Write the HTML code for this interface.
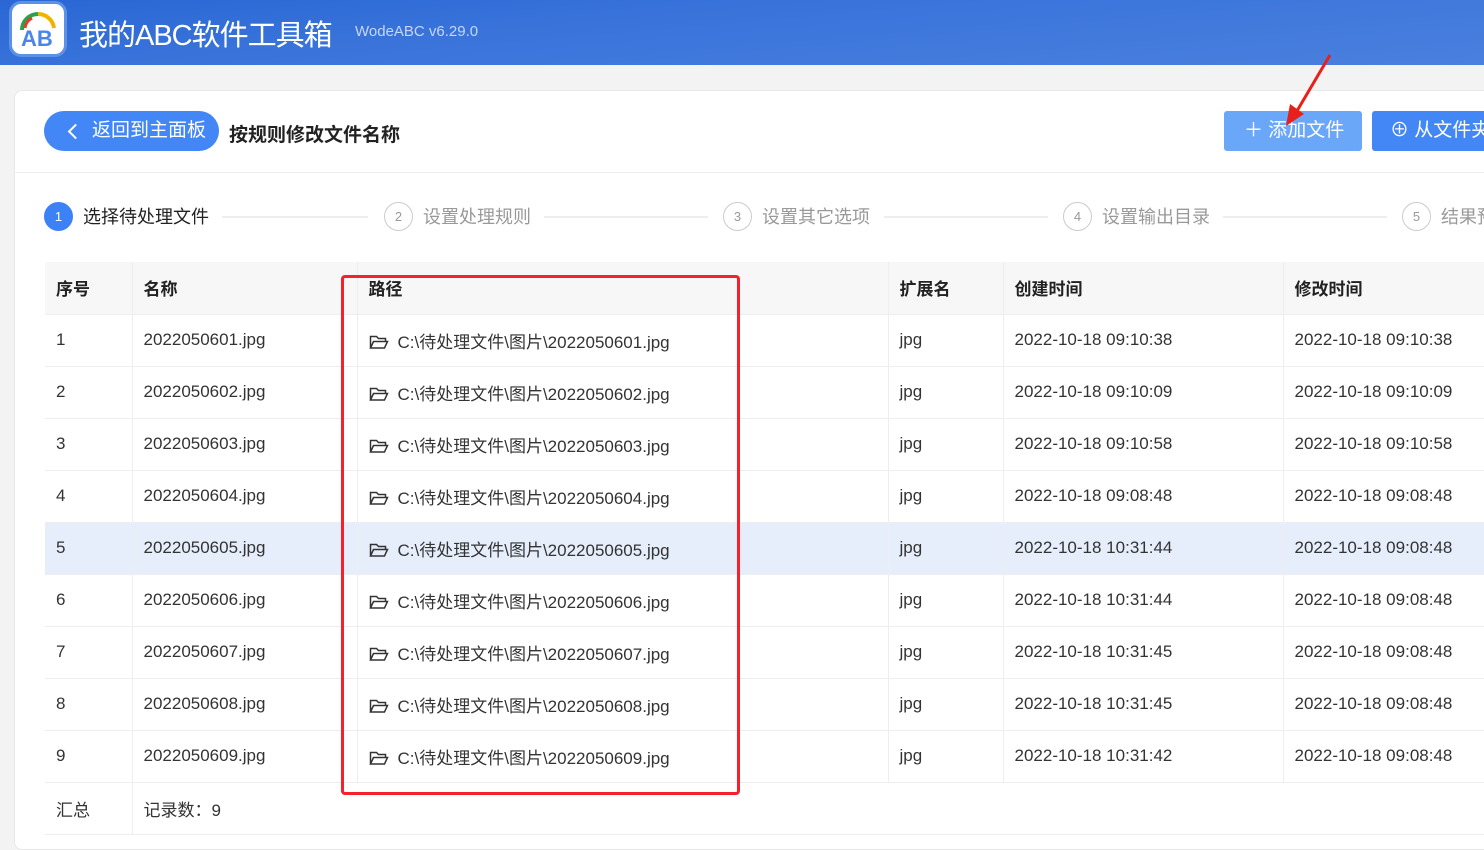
<!DOCTYPE html>
<html><head><meta charset="utf-8"><style>
*{margin:0;padding:0;box-sizing:border-box}
body{width:1484px;height:833px;overflow:hidden;background:#f3f3f3;font-family:"Liberation Sans","Noto Sans CJK SC",sans-serif;position:relative}
.top{position:absolute;left:0;top:0;width:1484px;height:65px;background:linear-gradient(175deg,#2a67d4 0%,#3a74db 40%,#4a80de 100%)}
.logo{position:absolute;left:9px;top:1px;width:58px;height:56px;background:#fff;border-radius:12px;border:3px solid #5d91e6}
.title{position:absolute;left:79px;top:12px;color:#fff;font-size:29px;letter-spacing:-1px;white-space:nowrap}
.ver{position:absolute;left:355px;top:23px;color:#c6d7f5;font-size:15px}
.card{position:absolute;left:14px;top:90px;width:1480px;height:760px;background:#fff;border:1px solid #e8e8e8;border-radius:8px}
.back{position:absolute;left:44px;top:111px;width:175px;height:40px;background:#4287f5;border-radius:20px;color:#fff;font-size:19px;line-height:40px;padding-left:48px}
.back:before{content:"";position:absolute;left:26px;top:15px;width:9px;height:9px;border-left:2px solid #fff;border-bottom:2px solid #fff;transform:rotate(45deg)}
.h{position:absolute;left:229px;top:120px;font-size:19px;font-weight:bold;color:#222}
.btn{position:absolute;top:111px;height:40px;color:#fff;font-size:19px;line-height:40px;border-radius:3px;white-space:nowrap;overflow:hidden}
.sep{position:absolute;left:14px;top:172px;width:1470px;height:1px;background:#eee}
.step{position:absolute;top:202px;font-size:18px;color:#999;line-height:30px;white-space:nowrap}
.step i{display:inline-block;width:29px;height:29px;border:1px solid #ccc;border-radius:50%;font-style:normal;font-size:13px;text-align:center;line-height:27px;margin-right:10px;vertical-align:top}
.line{position:absolute;top:216px;height:2px;background:#eee}
table{position:absolute;left:45px;top:262px;border-collapse:collapse;font-size:17px;color:#333;table-layout:fixed;width:1458px}
td{height:52px;border-bottom:1px solid #eee;border-right:1px solid #eee;padding-left:11px;white-space:nowrap;overflow:hidden}
tr.hd td{background:#f7f7f7;font-weight:bold;color:#222}
tr.sel td{background:#e6eefb}
.fo{display:inline-block;vertical-align:-2px;margin-right:9px}
.red{position:absolute;left:341px;top:275px;width:399px;height:520px;border:3px solid #f5222d;border-radius:4px}
</style></head><body>
<div class="top"></div>
<div class="logo"><svg width="52" height="50" viewBox="0 0 52 50"><path d="M10 26 A16 16 0 0 1 26 10" stroke="#2aa14a" stroke-width="4" fill="none"/><path d="M26 10 A16 16 0 0 1 42 24" stroke="#f0b400" stroke-width="4" fill="none"/><path d="M13 24 A13 13 0 0 1 20 14" stroke="#e63b2e" stroke-width="3" fill="none"/><text x="9" y="42" font-size="22" font-weight="bold" fill="#4a86e8" font-family="Liberation Sans">AB</text></svg></div>
<div class="title">我的ABC软件工具箱</div>
<div class="ver">WodeABC v6.29.0</div>
<div class="card"></div>
<div class="back">返回到主面板</div>
<div class="h">按规则修改文件名称</div>
<div class="btn" style="left:1224px;width:138px;background:#6aa7f8;padding-left:20px">＋&nbsp;添加文件</div>
<div class="btn" style="left:1372px;width:120px;background:#4287f5;padding-left:18px">⊕&nbsp;从文件夹</div>
<svg style="position:absolute;left:1280px;top:52px" width="60" height="80"><path d="M50 3 L14 64" stroke="#e8201b" stroke-width="3"/><path d="M6 74 L10 52 L24 62 Z" fill="#e8201b"/></svg>
<div class="sep"></div>
<div class="step" style="left:44px;color:#222"><i style="background:#3c82f6;border-color:#3c82f6;color:#fff">1</i>选择待处理文件</div>
<div class="line" style="left:222px;width:146px"></div>
<div class="step" style="left:384px"><i>2</i>设置处理规则</div>
<div class="line" style="left:544px;width:164px"></div>
<div class="step" style="left:723px"><i>3</i>设置其它选项</div>
<div class="line" style="left:884px;width:164px"></div>
<div class="step" style="left:1063px"><i>4</i>设置输出目录</div>
<div class="line" style="left:1223px;width:164px"></div>
<div class="step" style="left:1402px"><i>5</i>结果预览</div>
<table>
<colgroup><col style="width:87px"><col style="width:225px"><col style="width:531px"><col style="width:115px"><col style="width:280px"><col style="width:220px"></colgroup>
<tr class="hd"><td>序号</td><td>名称</td><td>路径</td><td>扩展名</td><td>创建时间</td><td>修改时间</td></tr>
<tr><td>1</td><td>2022050601.jpg</td><td><svg class="fo" width="20" height="16"><path d="M1.5 14V2.5h6l2 2h7v3M1.5 14l3-6.5h14l-3 6.5z" stroke="#333" stroke-width="1.5" fill="none"/></svg>C:\待处理文件\图片\2022050601.jpg</td><td>jpg</td><td>2022-10-18 09:10:38</td><td>2022-10-18 09:10:38</td></tr>
<tr><td>2</td><td>2022050602.jpg</td><td><svg class="fo" width="20" height="16"><path d="M1.5 14V2.5h6l2 2h7v3M1.5 14l3-6.5h14l-3 6.5z" stroke="#333" stroke-width="1.5" fill="none"/></svg>C:\待处理文件\图片\2022050602.jpg</td><td>jpg</td><td>2022-10-18 09:10:09</td><td>2022-10-18 09:10:09</td></tr>
<tr><td>3</td><td>2022050603.jpg</td><td><svg class="fo" width="20" height="16"><path d="M1.5 14V2.5h6l2 2h7v3M1.5 14l3-6.5h14l-3 6.5z" stroke="#333" stroke-width="1.5" fill="none"/></svg>C:\待处理文件\图片\2022050603.jpg</td><td>jpg</td><td>2022-10-18 09:10:58</td><td>2022-10-18 09:10:58</td></tr>
<tr><td>4</td><td>2022050604.jpg</td><td><svg class="fo" width="20" height="16"><path d="M1.5 14V2.5h6l2 2h7v3M1.5 14l3-6.5h14l-3 6.5z" stroke="#333" stroke-width="1.5" fill="none"/></svg>C:\待处理文件\图片\2022050604.jpg</td><td>jpg</td><td>2022-10-18 09:08:48</td><td>2022-10-18 09:08:48</td></tr>
<tr class="sel"><td>5</td><td>2022050605.jpg</td><td><svg class="fo" width="20" height="16"><path d="M1.5 14V2.5h6l2 2h7v3M1.5 14l3-6.5h14l-3 6.5z" stroke="#333" stroke-width="1.5" fill="none"/></svg>C:\待处理文件\图片\2022050605.jpg</td><td>jpg</td><td>2022-10-18 10:31:44</td><td>2022-10-18 09:08:48</td></tr>
<tr><td>6</td><td>2022050606.jpg</td><td><svg class="fo" width="20" height="16"><path d="M1.5 14V2.5h6l2 2h7v3M1.5 14l3-6.5h14l-3 6.5z" stroke="#333" stroke-width="1.5" fill="none"/></svg>C:\待处理文件\图片\2022050606.jpg</td><td>jpg</td><td>2022-10-18 10:31:44</td><td>2022-10-18 09:08:48</td></tr>
<tr><td>7</td><td>2022050607.jpg</td><td><svg class="fo" width="20" height="16"><path d="M1.5 14V2.5h6l2 2h7v3M1.5 14l3-6.5h14l-3 6.5z" stroke="#333" stroke-width="1.5" fill="none"/></svg>C:\待处理文件\图片\2022050607.jpg</td><td>jpg</td><td>2022-10-18 10:31:45</td><td>2022-10-18 09:08:48</td></tr>
<tr><td>8</td><td>2022050608.jpg</td><td><svg class="fo" width="20" height="16"><path d="M1.5 14V2.5h6l2 2h7v3M1.5 14l3-6.5h14l-3 6.5z" stroke="#333" stroke-width="1.5" fill="none"/></svg>C:\待处理文件\图片\2022050608.jpg</td><td>jpg</td><td>2022-10-18 10:31:45</td><td>2022-10-18 09:08:48</td></tr>
<tr><td>9</td><td>2022050609.jpg</td><td><svg class="fo" width="20" height="16"><path d="M1.5 14V2.5h6l2 2h7v3M1.5 14l3-6.5h14l-3 6.5z" stroke="#333" stroke-width="1.5" fill="none"/></svg>C:\待处理文件\图片\2022050609.jpg</td><td>jpg</td><td>2022-10-18 10:31:42</td><td>2022-10-18 09:08:48</td></tr>
<tr><td>汇总</td><td style="border-right:none">记录数：9</td><td style="border-right:none"></td><td style="border-right:none"></td><td style="border-right:none"></td><td style="border-right:none"></td></tr>
</table>
<div class="red"></div>
</body></html>
